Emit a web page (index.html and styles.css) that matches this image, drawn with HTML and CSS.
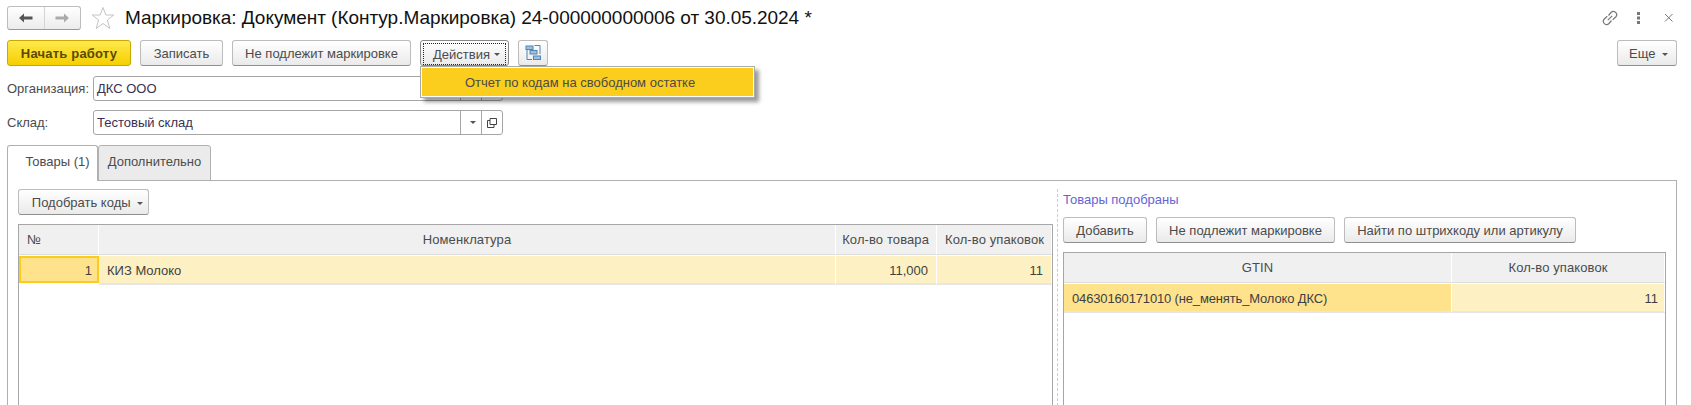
FILE: index.html
```html
<!DOCTYPE html>
<html lang="ru">
<head>
    <meta charset="UTF-8">
    <title>Маркировка</title>
    <link rel="stylesheet" href="styles.css">
</head>
<body>
    <!-- Заголовок -->
    <div class="title-row">
        <div class="nav-box">
            <div class="nav-cell">
                <svg width="16" height="12" viewBox="0 0 16 12"><path d="M1 6 6 1.500V4.500H14.500V7.500H6V10.500Z" fill="#555"/></svg>
            </div>
            <div class="nav-cell nav-next">
                <svg width="16" height="12" viewBox="0 0 16 12"><path d="M15 6 10 1.500V4.500H1.500V7.500H10V10.500Z" fill="#aaa"/></svg>
            </div>
        </div>
        <svg class="star" width="24" height="24" viewBox="0 0 24 24"><path d="M12 1.500 14.800 9H22.800L16.400 14 18.800 22.500 12 17.500 5.200 22.500 7.600 14 1.200 9H9.200Z" fill="#fff" stroke="#c4c4c4"/></svg>
        <h1>Маркировка: Документ (Контур.Маркировка) 24-000000000006 от 30.05.2024 *</h1>
        <div class="win-icons">
            <svg width="18" height="18" viewBox="0 0 18 18" fill="none" stroke="#777" stroke-width="1.200"><path d="M7.500 6.500 10 3.500a3.200 3.200 0 0 1 4.700 4.500L11.700 10.700"/><path d="M10.500 11.500 8 14.500a3.200 3.200 0 0 1-4.700-4.500L6.300 7.300"/><path d="M6.800 11.200 11.200 6.800"/></svg>
            <svg width="6" height="18" viewBox="0 0 6 18" fill="#777"><rect x="1" y="3" width="3" height="3"/><rect x="1" y="7.500" width="3" height="3"/><rect x="1" y="12" width="3" height="3"/></svg>
            <svg class="win-close" width="12" height="18" viewBox="0 0 12 18" fill="none" stroke="#777"><path d="M2 5 9.500 12.500M9.500 5 2 12.500"/></svg>
        </div>
    </div>

    <!-- Командная панель -->
    <div class="toolbar">
        <button class="btn btn-main">Начать работу</button>
        <button class="btn w-save">Записать</button>
        <button class="btn w-skip">Не подлежит маркировке</button>
        <div class="actions">
            <button class="btn btn-actions"><span class="focus-box">Действия <i class="caret"></i></span></button>
            <div class="menu">
                <div class="menu-item">Отчет по кодам на свободном остатке</div>
            </div>
        </div>
        <button class="btn btn-icon">
            <svg width="16" height="16" viewBox="0 0 16 16" fill="none" stroke="#4f86b5"><rect x="1" y="1" width="7" height="3.500" fill="#9cc0dc"/><rect x="5" y="5.500" width="7" height="3.500" fill="#9cc0dc"/><rect x="8.500" y="11" width="7" height="3.500" fill="#9cc0dc"/><path d="M2 5V14.500H7M9.500 .5H15V9"/></svg>
        </button>
        <button class="btn btn-more">Еще <i class="caret"></i></button>
    </div>

    <!-- Реквизиты -->
    <div class="field-row">
        <label>Организация:</label>
        <div class="field">
            <span class="field-text">ДКС ООО</span>
            <span class="field-btn"><i class="caret"></i></span>
            <span class="field-btn"><svg width="10" height="10" viewBox="0 0 10 10" fill="none" stroke="#444"><path d="M3 .5H9.500V6.500H3ZM3 2.500H.5V9.500H7V7"/></svg></span>
        </div>
    </div>
    <div class="field-row field-row-next">
        <label>Склад:</label>
        <div class="field">
            <span class="field-text">Тестовый склад</span>
            <span class="field-btn"><i class="caret"></i></span>
            <span class="field-btn"><svg width="10" height="10" viewBox="0 0 10 10" fill="none" stroke="#444"><path d="M3 .5H9.500V6.500H3ZM3 2.500H.5V9.500H7V7"/></svg></span>
        </div>
    </div>

    <!-- Закладки -->
    <div class="tabs">
        <div class="tab tab-active">Товары (1)</div>
        <div class="tab">Дополнительно</div>
    </div>
    <div class="tab-panel">
        <div class="pane-left">
            <button class="btn btn-pick">Подобрать коды <i class="caret"></i></button>
            <div class="grid grid-left">
                <div class="head">№</div>
                <div class="head center">Номенклатура</div>
                <div class="head right">Кол-во товара</div>
                <div class="head right">Кол-во упаковок</div>
                <div class="cell current right">1</div>
                <div class="cell">КИЗ Молоко</div>
                <div class="cell right">11,000</div>
                <div class="cell right">11</div>
            </div>
        </div>
        <div class="pane-right">
            <div class="pane-title">Товары подобраны</div>
            <div class="pane-buttons">
                <button class="btn w-add">Добавить</button>
                <button class="btn w-skip">Не подлежит маркировке</button>
                <button class="btn w-find">Найти по штрихкоду или артикулу</button>
            </div>
            <div class="grid grid-right">
                <div class="head center">GTIN</div>
                <div class="head center">Кол-во упаковок</div>
                <div class="cell selected">04630160171010 (не_менять_Молоко ДКС)</div>
                <div class="cell right">11</div>
            </div>
        </div>
    </div>
</body>
</html>
```

FILE: styles.css
```css
html, body {
    height: 405px;
    overflow: hidden;
}
body {
    margin: 0;
    background-color: #fff;
    font-family: "Liberation Sans", Arial, sans-serif;
    font-size: 13px;
    color: #4b4b4b;
}
.title-row {
    display: flex;
    align-items: center;
    height: 24px;
    padding: 6px 0 0 7px;
}
.nav-box {
    display: flex;
    width: 74px;
    height: 24px;
    box-sizing: border-box;
    border: 1px solid #bdbdbd;
    border-bottom-color: #999;
    border-radius: 3px;
    background: linear-gradient(#fff, #ececec);
}
.nav-cell {
    flex: 1;
    display: flex;
    align-items: center;
    justify-content: center;
}
.nav-next {
    border-left: 1px solid #d4d4d4;
}
.star {
    margin-left: 10px;
}
h1 {
    margin: 0 0 0 10px;
    font-size: 19px;
    font-weight: normal;
    letter-spacing: -0.03px;
    color: #111;
    white-space: nowrap;
}
.win-icons {
    margin-left: auto;
    margin-right: 16px;
    display: flex;
    align-items: center;
    gap: 17px;
}
.win-close {
    margin-left: 4px;
}
.toolbar {
    display: flex;
    gap: 9px;
    margin-top: 10px;
    padding: 0 14px 0 7px;
}
.btn {
    height: 26px;
    box-sizing: border-box;
    padding: 0;
    border: 1px solid #bcbcbc;
    border-bottom-color: #8f8f8f;
    border-radius: 3px;
    background: linear-gradient(#fff, #eaeaea);
    font-family: inherit;
    font-size: 13px;
    color: #4b4b4b;
    white-space: nowrap;
}
.btn-main {
    width: 124px;
    border-color: #c9a800;
    background: linear-gradient(#ffe94d, #f5cf00);
    font-weight: bold;
    letter-spacing: 0.2px;
    color: #5a4a00;
}
.w-save { width: 83px; }
.w-skip { width: 179px; }
.w-add { width: 84px; }
.w-find { width: 232px; }
.actions {
    position: relative;
}
.btn-actions {
    width: 89px;
    padding: 2px;
    border-color: #888;
}
.focus-box {
    display: flex;
    align-items: center;
    justify-content: center;
    gap: 1px;
    height: 100%;
    padding-left: 4px;
    border: 1px dotted #222;
}
.btn-icon {
    width: 30px;
    padding-top: 3px;
}
.btn-more {
    margin-left: auto;
    width: 60px;
    padding-left: 3px;
}
.caret {
    display: inline-block;
    width: 0;
    height: 0;
    margin-left: 3px;
    vertical-align: middle;
    border-left: 3px solid transparent;
    border-right: 3px solid transparent;
    border-top: 3px solid #555;
}
/* Выпадающее меню */
.menu {
    position: absolute;
    top: 26px;
    left: 0;
    z-index: 5;
    width: 335px;
    box-sizing: border-box;
    border: 1px solid #aaa;
    padding: 1px;
    background-color: #fff;
    box-shadow: 4px 4px 4px rgba(0, 0, 0, 0.4);
}
.menu-item {
    height: 28px;
    line-height: 29px;
    padding-left: 43px;
    background-color: #fbcd1c;
}
.field-row {
    display: flex;
    align-items: center;
    height: 25px;
    margin-top: 10px;
    padding-left: 7px;
}
.field-row-next {
    margin-top: 9px;
}
.field-row label {
    width: 86px;
}
.field {
    display: flex;
    width: 410px;
    height: 25px;
    box-sizing: border-box;
    border: 1px solid #a6a6a6;
    border-radius: 3px;
}
.field-text {
    flex: 1;
    padding-left: 3px;
    line-height: 23px;
    color: #3a3050;
}
.field-btn {
    width: 20px;
    display: flex;
    align-items: center;
    justify-content: center;
    border-left: 1px solid #a6a6a6;
}
.tabs {
    display: flex;
    height: 35px;
    margin-top: 10px;
    padding-left: 7px;
}
.tab {
    width: 113px;
    height: 36px;
    box-sizing: border-box;
    border: 1px solid #b0b0b0;
    border-radius: 3px 3px 0 0;
    background-color: #ebebeb;
    line-height: 32px;
    text-align: center;
}
.tab-active {
    position: relative;
    z-index: 1;
    width: 91px;
    padding-left: 10px;
    border-bottom: none;
    background-color: #fff;
}
/* Нижний край формы за пределами окна */
.tab-panel {
    display: flex;
    width: 1670px;
    height: 226px;
    margin-left: 7px;
    box-sizing: border-box;
    border: 1px solid #b0b0b0;
    border-bottom: none;
    padding: 8px 10px 0;
}
.pane-left {
    display: flex;
    flex-direction: column;
    width: 1035px;
}
.btn-pick {
    width: 131px;
    display: block;
    flex: none;
    padding-left: 8px;
}
.pane-right {
    display: flex;
    flex-direction: column;
    width: 603px;
    margin-left: 4px;
    padding-left: 5px;
    border-left: 1px dashed #ccc;
}
.pane-title {
    height: 20px;
    line-height: 22px;
    color: #6464d8;
}
.pane-buttons {
    display: flex;
    gap: 9px;
    margin-top: 8px;
}
.grid {
    flex: 1;
    display: grid;
    grid-auto-rows: min-content;
    box-sizing: border-box;
    border: 1px solid #a6a6a6;
    border-bottom: none;
    background-color: #fff;
}
.grid-left {
    margin-top: 9px;
    grid-template-columns: 80px 737px 101px 115px;
}
.grid-right {
    margin-top: 9px;
    grid-template-columns: 388px 213px;
}
.head {
    height: 30px;
    box-sizing: border-box;
    padding: 0 8px;
    line-height: 29px;
    letter-spacing: 0.1px;
    border-right: 1px solid #fff;
    border-bottom: 1px solid #dcdcdc;
    background-color: #f0f0f0;
}
.head.right {
    padding: 0 7px 0 0;
}
.cell {
    height: 29px;
    margin-top: 1px;
    box-sizing: border-box;
    padding: 0 8px;
    line-height: 29px;
    border-right: 1px solid #fff;
    border-bottom: 2px solid #e6e6e6;
    background-color: #fdf1c3;
    color: #3f3f3f;
    background-clip: padding-box;
}
.grid-right .cell.right {
    padding-right: 6px;
}
.cell.current {
    border: 2px solid #fbcb1e;
    height: 27px;
    line-height: 25px;
    padding: 0 5px;
    background-color: #fee28c;
}
.cell.selected {
    letter-spacing: -0.15px;
    background-color: #fee28c;
}
.center {
    text-align: center;
}
.right {
    text-align: right;
}
```
